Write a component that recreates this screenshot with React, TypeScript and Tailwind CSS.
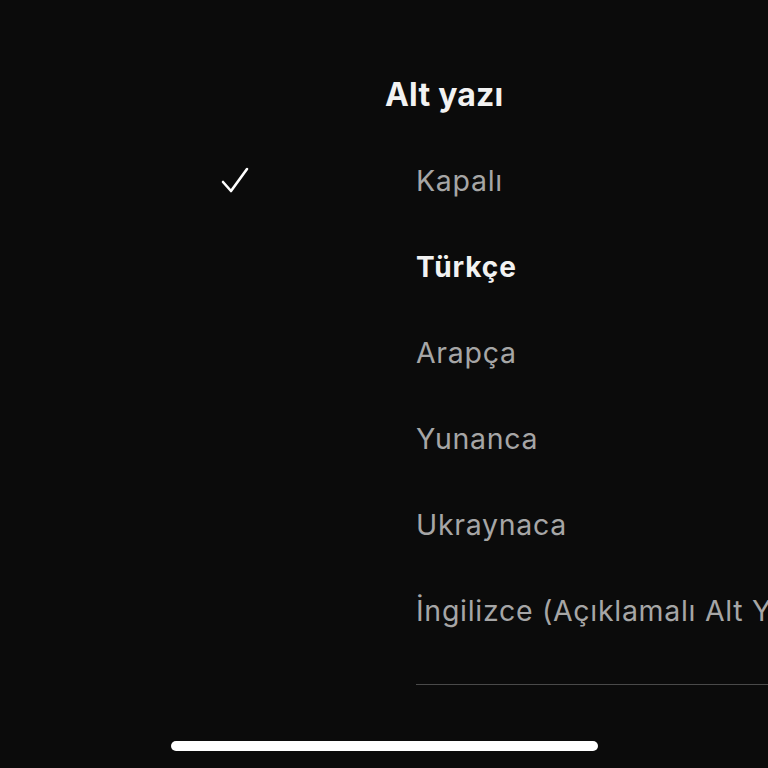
import React from "react";

const items = [
  { label: "Kapalı", checked: true, bold: false },
  { label: "Türkçe", checked: false, bold: true },
  { label: "Arapça", checked: false, bold: false },
  { label: "Yunanca", checked: false, bold: false },
  { label: "Ukraynaca", checked: false, bold: false },
  { label: "İngilizce (Açıklamalı Alt Yazı)", checked: false, bold: false },
];

export default function App() {
  return (
    <div
      className="w-[768px] h-[768px] bg-[#0b0b0b] overflow-hidden flex flex-col"
      style={{ fontFamily: "Inter, 'Noto Sans', sans-serif" }}
    >
      <div className="pt-[52px] pl-[385px] h-[138px] flex items-center shrink-0">
        <div className="h-[86px] flex items-center text-[32px] font-bold text-[#f2f2f2] tracking-[0.2px]">
          Alt yazı
        </div>
      </div>
      {items.map((it) => (
        <div key={it.label} className="h-[86px] flex items-center whitespace-nowrap shrink-0">
          <div className="w-[416px] shrink-0 pl-[221px] flex items-center">
            {it.checked && (
              <svg width="28" height="28" viewBox="0 0 28 28" fill="none">
                <polyline
                  points="2,15 10,24 26,2"
                  stroke="#ffffff"
                  strokeWidth="2.6"
                  strokeLinecap="round"
                  strokeLinejoin="round"
                />
              </svg>
            )}
          </div>
          <div
            className={
              it.bold
                ? "text-[28px] font-bold text-[#f2f2f2] tracking-[0.9px]"
                : "text-[28.5px] text-[#a6a6a6] tracking-[0.7px]"
            }
          >
            {it.label}
          </div>
        </div>
      ))}
      <div className="mt-[30px] ml-[416px] h-[1px] bg-[#4a4a4a] shrink-0" />
      <div className="mt-[56px] flex pl-[171px] shrink-0">
        <div className="w-[427px] h-[10px] rounded-full bg-white" />
      </div>
    </div>
  );
}
